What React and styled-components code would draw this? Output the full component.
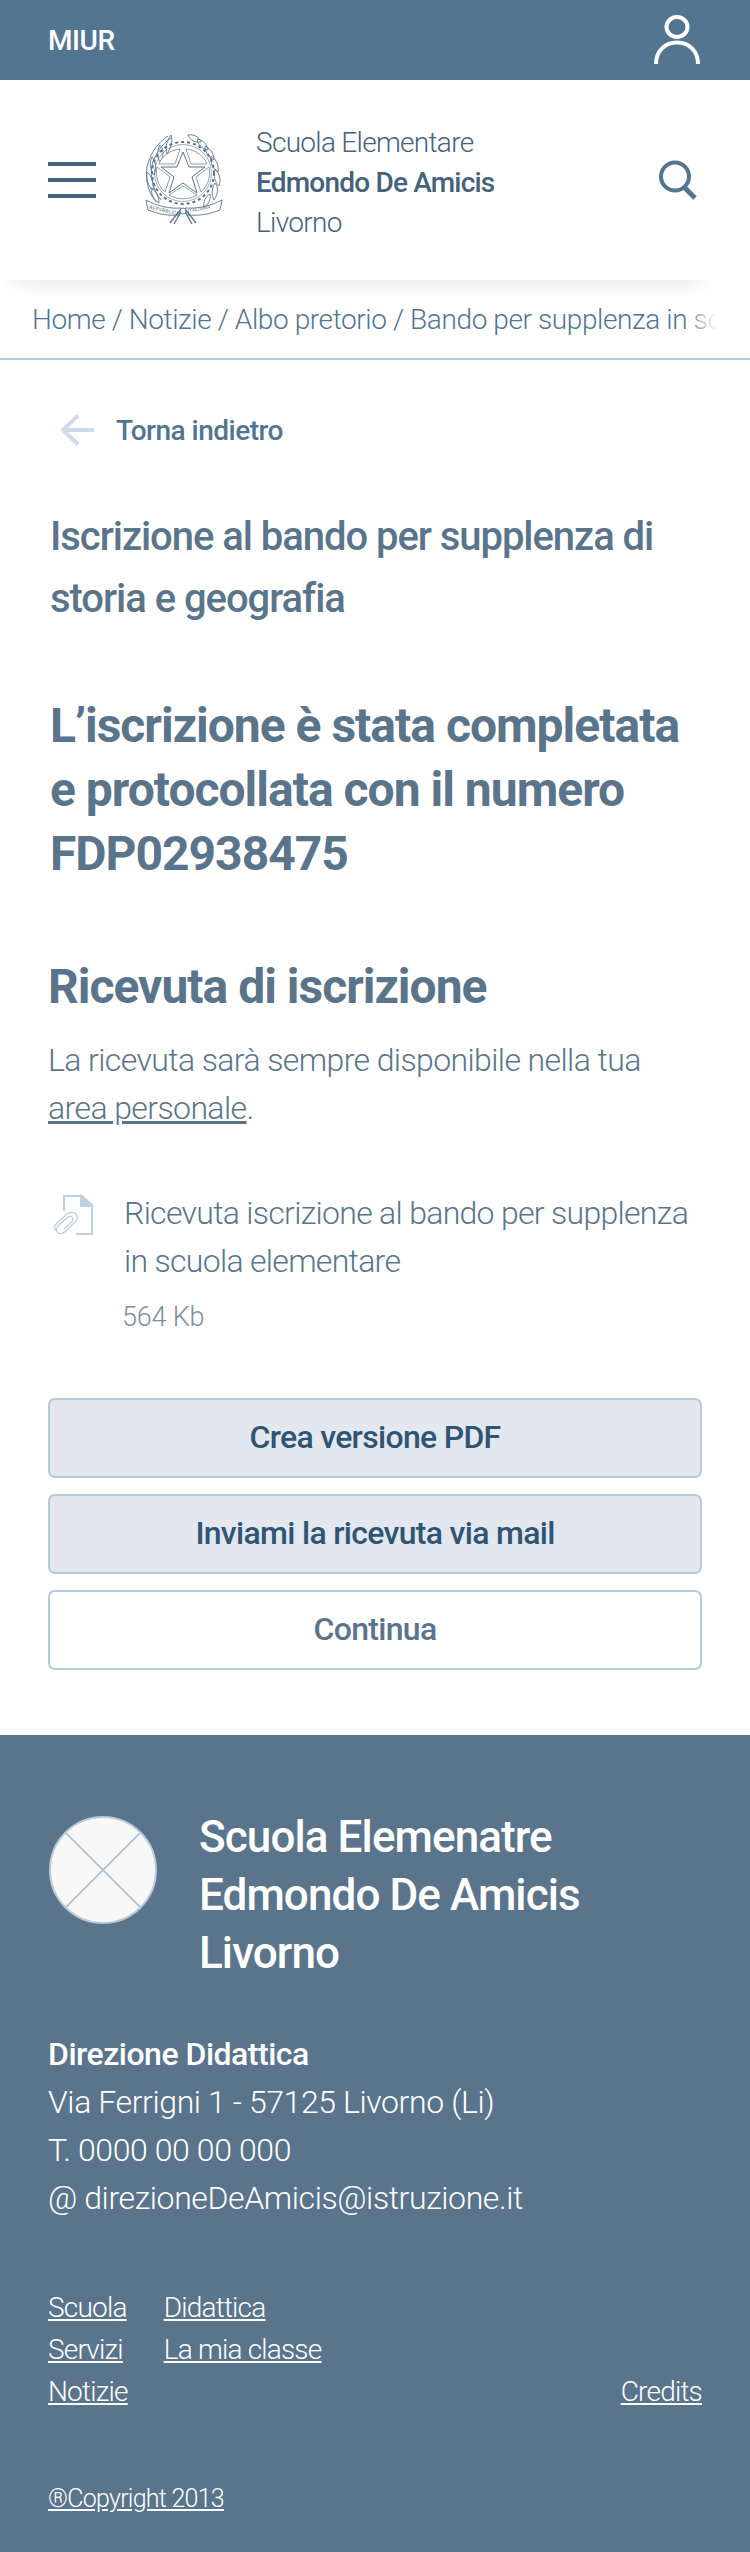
import React from "react"
import styled, { createGlobalStyle, css } from "styled-components"

const GlobalStyle = createGlobalStyle`
  html, body {
    margin: 0;
    padding: 0;
    background: #fff;
    font-family: "Roboto", "Noto Sans", sans-serif;
    color: #5a758b;
  }
  * { box-sizing: border-box; }
`

const App = () => {
  return (
    <Page>
      <GlobalStyle />
      <TopBar>
        <Miur>MIUR</Miur>
        <UserIcon />
      </TopBar>
      <Header>
        <Burger>
          <span />
          <span />
          <span />
        </Burger>
        <Emblem />
        <SchoolName>
          Scuola Elementare
          <strong>Edmondo De Amicis</strong>
          Livorno
        </SchoolName>
        <SearchIcon />
      </Header>
      <Breadcrumb>Home / Notizie / Albo pretorio / Bando per supplenza in scuola elementare</Breadcrumb>
      <Main>
        <Back>
          <BackArrow />
          Torna indietro
        </Back>
        <BandoTitle>
          Iscrizione al bando per supplenza di
          <br />
          storia e geografia
        </BandoTitle>
        <Done>
          L’iscrizione è stata completata
          <br />
          e protocollata con il numero
          <br />
          FDP02938475
        </Done>
        <Section>Ricevuta di iscrizione</Section>
        <Lead>
          La ricevuta sarà sempre disponibile nella tua
          <br />
          <a href="#area">area personale</a>.
        </Lead>
        <Attachment>
          <ClipIcon />
          <div>
            <FileName>
              Ricevuta iscrizione al bando per supplenza
              <br />
              in scuola elementare
            </FileName>
            <FileSize>564 Kb</FileSize>
          </div>
        </Attachment>
        <Actions>
          <Button $filled>Crea versione PDF</Button>
          <Button $filled>Inviami la ricevuta via mail</Button>
          <Button>Continua</Button>
        </Actions>
      </Main>
      <Footer>
        <Brand>
          <Placeholder />
          <BrandName>
            Scuola Elemenatre
            <br />
            Edmondo De Amicis
            <br />
            Livorno
          </BrandName>
        </Brand>
        <Contacts>
          <strong>Direzione Didattica</strong>
          <br />
          Via Ferrigni 1 - 57125 Livorno (Li)
          <br />
          T. 0000 00 00 000
          <br />@ direzioneDeAmicis@istruzione.it
        </Contacts>
        <FooterNav>
          <FooterLink href="#scuola">Scuola</FooterLink>
          <FooterLink href="#didattica">Didattica</FooterLink>
          <span />
          <FooterLink href="#servizi">Servizi</FooterLink>
          <FooterLink href="#classe">La mia classe</FooterLink>
          <span />
          <FooterLink href="#notizie">Notizie</FooterLink>
          <span />
          <FooterLink href="#credits">Credits</FooterLink>
        </FooterNav>
        <Copyright href="#copyright">®Copyright 2013</Copyright>
      </Footer>
    </Page>
  )
}

const UserIcon = () => (
  <svg width="46" height="50" viewBox="0 0 46 50" fill="none" stroke="#fff" strokeWidth="4">
    <ellipse cx="23" cy="12" rx="10.5" ry="10" />
    <path d="M2 49 C2 36 11 27.5 23 27.5 C35 27.5 44 36 44 49" />
  </svg>
)

const SearchIcon = () => (
  <svg width="40" height="40" viewBox="0 0 40 40" fill="none" stroke="#537590">
    <circle cx="17" cy="16.5" r="14" strokeWidth="4" />
    <path d="M26 27 L37 38" strokeWidth="5" />
  </svg>
)

const BackArrow = () => (
  <svg width="34" height="32" viewBox="0 0 34 32" fill="none" stroke="#cfdce7" strokeWidth="4">
    <path d="M18 1.5 L3 16 L18 30.5" />
    <path d="M3 16 H34" />
  </svg>
)

const ClipIcon = () => (
  <svg width="42" height="42" viewBox="0 0 42 42" fill="none" stroke="#bfd0de" strokeWidth="2">
    <path d="M12 17 V2 H30 L40 11 V40 H24" />
    <path d="M29 2 L40 12 H29 Z" fill="#bfd0de" />
    <path d="M4 36.5 C1.5 34 2.5 31.5 5 29 L15 20 C18 17.5 22 18 24 20 C26 22.5 25.5 25.5 23 28 L15 36 C11.5 39.5 8 40.5 5.5 38.5 C3.5 36.5 4.5 33.5 7 31 L15.5 23.5 C17.5 22 19.5 22.5 20.5 23.5 C21.5 25 21 26.5 19.5 28 L12 35" strokeWidth="1.3" />
  </svg>
)

const Emblem = () => (
  <EmblemSvg viewBox="0 0 80 90" fill="none" stroke="#5a758b" strokeWidth="0.9">
    {/* wheat on the left */}
    <path d="M24 2 C14 8 6 20 3 33 C1 46 4 58 12 68" />
    <path d="M27 4 C18 10 11 20 8 31 C6 44 9 56 17 66" />
    <path d="M27 1 C29 7 27 14 23 20 C21 13 23 6 27 1 Z" />
    <path d="M16 11 C20 15 20 22 16 28 C13 23 13 16 16 11 Z" />
    <path d="M8 23 C12 28 13 34 10 41 C6 36 5 29 8 23 Z" />
    <path d="M3 38 C8 42 10 49 9 56 C4 52 2 45 3 38 Z" />
    <path d="M7 54 C12 57 15 62 15 69 C10 66 7 60 7 54 Z" />
    {/* oak on the right */}
    <path d="M44 1 C50 0 55 3 57 8 C51 9 46 6 44 1 Z" />
    <path d="M53 5 C59 6 63 10 64 16 C58 15 54 11 53 5 Z" />
    <path d="M61 12 C67 15 70 20 70 26 C65 24 61 19 61 12 Z" />
    <path d="M67 22 C73 26 75 32 74 38 C69 35 66 29 67 22 Z" />
    <path d="M71 35 C76 40 77 46 75 52 C71 48 69 42 71 35 Z" />
    <path d="M71 49 C75 54 74 60 70 66 C67 60 68 54 71 49 Z" />
    <path d="M66 60 C67 65 65 70 60 73 C59 68 61 63 66 60 Z" />
    {/* gear behind the star */}
    <circle cx="39" cy="39" r="31" strokeWidth="2" strokeDasharray="3 3" />
    <circle cx="39" cy="39" r="28.5" strokeWidth="0.6" />
    <path d="M39 18 L45 33 L61 33 L48 43 L53 59 L39 49 L25 59 L30 43 L17 33 L33 33 Z" strokeWidth="1" fill="#fff" />
    <path d="M36 15 L31 30 L15 30 C18 22 26 16 36 15 Z" strokeWidth="0.7" fill="#fff" />
    <path d="M42 15 L47 30 L63 30 C60 22 52 16 42 15 Z" strokeWidth="0.7" fill="#fff" />
    <path d="M13 33 L26 43 L21 58 C14 52 11 42 13 33 Z" strokeWidth="0.7" fill="#fff" />
    <path d="M65 33 L52 43 L57 58 C64 52 67 42 65 33 Z" strokeWidth="0.7" fill="#fff" />
    <path d="M25 61 L39 52 L53 61 C45 66 33 66 25 61 Z" strokeWidth="0.7" fill="#fff" />
    {/* ribbon */}
    <path d="M2 66 L4 76 C14 80 24 82 35 81 L37 74 C25 75 13 72 2 66 Z" fill="#fff" />
    <path d="M78 66 L76 76 C66 80 56 82 43 81 L41 74 C53 75 67 72 78 66 Z" fill="#fff" />
    <RibbonText x="5" y="75" transform="rotate(12 5 75)">REPVBBLICA</RibbonText>
    <RibbonText x="44" y="79" transform="rotate(-12 44 79)">ITALIANA</RibbonText>
    <path d="M36 76 L26 89 M38 76 L30 90 M42 76 L52 89 M40 76 L48 90" strokeWidth="1.3" />
    <circle cx="39" cy="77" r="3" fill="#fff" />
  </EmblemSvg>
)

const Page = styled.div`
  width: 750px;
  overflow: hidden;
`

const TopBar = styled.div`
  display: flex;
  align-items: center;
  justify-content: space-between;
  height: 80px;
  padding: 0 50px 0 48px;
  background: #537590;
`

const Miur = styled.span`
  color: #fff;
  font-size: 28px;
  font-weight: 500;
  letter-spacing: -0.4px;
`

const Header = styled.header`
  position: relative;
  z-index: 1;
  display: flex;
  align-items: center;
  height: 200px;
  padding: 0 52px 0 48px;
  background: #fff;
  box-shadow: 0 12px 24px -14px rgba(0, 0, 0, 0.14);
`

const Burger = styled.div`
  display: flex;
  flex-direction: column;
  justify-content: space-between;
  width: 48px;
  height: 36px;
  margin-right: 48px;

  span {
    height: 4px;
    background: #46627b;
  }
`

const EmblemSvg = styled.svg`
  width: 80px;
  height: 90px;
  margin: 0 32px 2px 0;
`

const RibbonText = styled.text`
  font-size: 5px;
  stroke: none;
  fill: #5a758b;
  letter-spacing: 0.2px;
`

const SchoolName = styled.div`
  flex: 1;
  padding-top: 5px;
  font-size: 28px;
  font-weight: 300;
  line-height: 40px;
  letter-spacing: -0.7px;
  color: #46627b;

  strong {
    display: block;
    font-weight: 500;
    letter-spacing: -0.8px;
  }
`

const Breadcrumb = styled.nav`
  position: relative;
  height: 80px;
  padding: 0 0 0 32px;
  overflow: hidden;
  white-space: nowrap;
  font-size: 28px;
  font-weight: 300;
  line-height: 80px;
  letter-spacing: -0.4px;
  color: #537590;
  border-bottom: 2px solid #b8cad9;

  &::after {
    content: "";
    position: absolute;
    z-index: 2;
    top: 0;
    right: 0;
    bottom: 0;
    width: 66px;
    background: linear-gradient(to right, rgba(255, 255, 255, 0), #fff 50%);
  }
`

const Main = styled.main`
  padding: 0 48px 65px;
`

const Back = styled.div`
  display: flex;
  align-items: center;
  gap: 22px;
  height: 32px;
  margin: 54px 0 0 12px;
  font-size: 28px;
  font-weight: 500;
  letter-spacing: -0.5px;
  color: #537590;
`

const BandoTitle = styled.h2`
  margin: 60px 0 0 2px;
  font-size: 40px;
  font-weight: 500;
  line-height: 62px;
  letter-spacing: -1.05px;
  white-space: nowrap;
  color: #5a758b;
`

const Done = styled.h1`
  margin: 64px 0 0 2px;
  font-size: 48px;
  font-weight: 700;
  line-height: 64px;
  letter-spacing: -1px;
  white-space: nowrap;
  color: #5a758b;
`

const Section = styled.h3`
  margin: 69px 0 0;
  font-size: 48px;
  font-weight: 700;
  line-height: 64px;
  letter-spacing: -1px;
  color: #5a758b;
`

const Lead = styled.p`
  margin: 17px 0 0;
  font-size: 32px;
  font-weight: 300;
  line-height: 48px;
  letter-spacing: -0.6px;
  white-space: nowrap;
  color: #5a758b;

  a {
    color: inherit;
  }
`

const Attachment = styled.div`
  display: flex;
  align-items: flex-start;
  gap: 30px;
  margin-top: 60px;
  padding-left: 4px;

  svg {
    flex: none;
    margin-top: 2px;
  }
`

const FileName = styled.div`
  font-size: 32px;
  font-weight: 300;
  line-height: 48px;
  letter-spacing: -0.7px;
  white-space: nowrap;
  margin-top: -3px;
`

const FileSize = styled.div`
  margin: 12px 0 0 -2px;
  font-size: 27px;
  font-weight: 300;
  line-height: 40px;
  letter-spacing: -0.2px;
  color: #7b8f9f;
`

const Actions = styled.div`
  display: flex;
  flex-direction: column;
  gap: 16px;
  margin-top: 61px;
`

const Button = styled.button`
  display: block;
  width: 100%;
  height: 80px;
  padding: 0 0 2px;
  border: 2px solid #b8cad9;
  border-radius: 7px;
  background: #fff;
  font-family: inherit;
  font-size: 32px;
  font-weight: 500;
  letter-spacing: -0.7px;
  color: #5a758b;

  ${(p) =>
    p.$filled &&
    css`
      background: #e3e8f0;
      color: #2f5572;
    `}
`

const Footer = styled.footer`
  height: 818px;
  padding: 81px 48px 0;
  background: #5a758b;
  color: #fff;
`

const Brand = styled.div`
  display: flex;
  align-items: flex-start;
  gap: 42px;
`

const Placeholder = styled.div`
  flex: none;
  width: 108px;
  height: 108px;
  margin-left: 1px;
  border: 2px solid #b8cad9;
  border-radius: 50%;
  background:
    linear-gradient(45deg, transparent calc(50% - 1px), #b8cad9 calc(50% - 1px), #b8cad9 calc(50% + 1px), transparent calc(50% + 1px)),
    linear-gradient(-45deg, transparent calc(50% - 1px), #b8cad9 calc(50% - 1px), #b8cad9 calc(50% + 1px), transparent calc(50% + 1px)),
    #f8f8f8;
`

const BrandName = styled.div`
  margin-top: -8px;
  font-size: 44px;
  font-weight: 500;
  line-height: 58px;
  letter-spacing: -0.9px;
  white-space: nowrap;
`

const Contacts = styled.address`
  margin-top: 48px;
  font-size: 32px;
  font-style: normal;
  font-weight: 300;
  line-height: 48px;
  letter-spacing: -0.4px;

  strong {
    font-weight: 500;
    letter-spacing: -0.5px;
  }
`

const FooterNav = styled.nav`
  display: grid;
  grid-template-columns: auto auto 1fr;
  column-gap: 36px;
  justify-content: start;
  justify-items: start;
  margin-top: 65px;
  line-height: 42px;

  a:last-child {
    justify-self: end;
  }
`

const FooterLink = styled.a`
  font-size: 28px;
  font-weight: 300;
  letter-spacing: -0.8px;
  color: #fff;
`

const Copyright = styled.a`
  display: inline-block;
  margin-top: 71px;
  font-size: 25px;
  font-weight: 300;
  letter-spacing: -0.75px;
  color: #fff;
`

export default App
